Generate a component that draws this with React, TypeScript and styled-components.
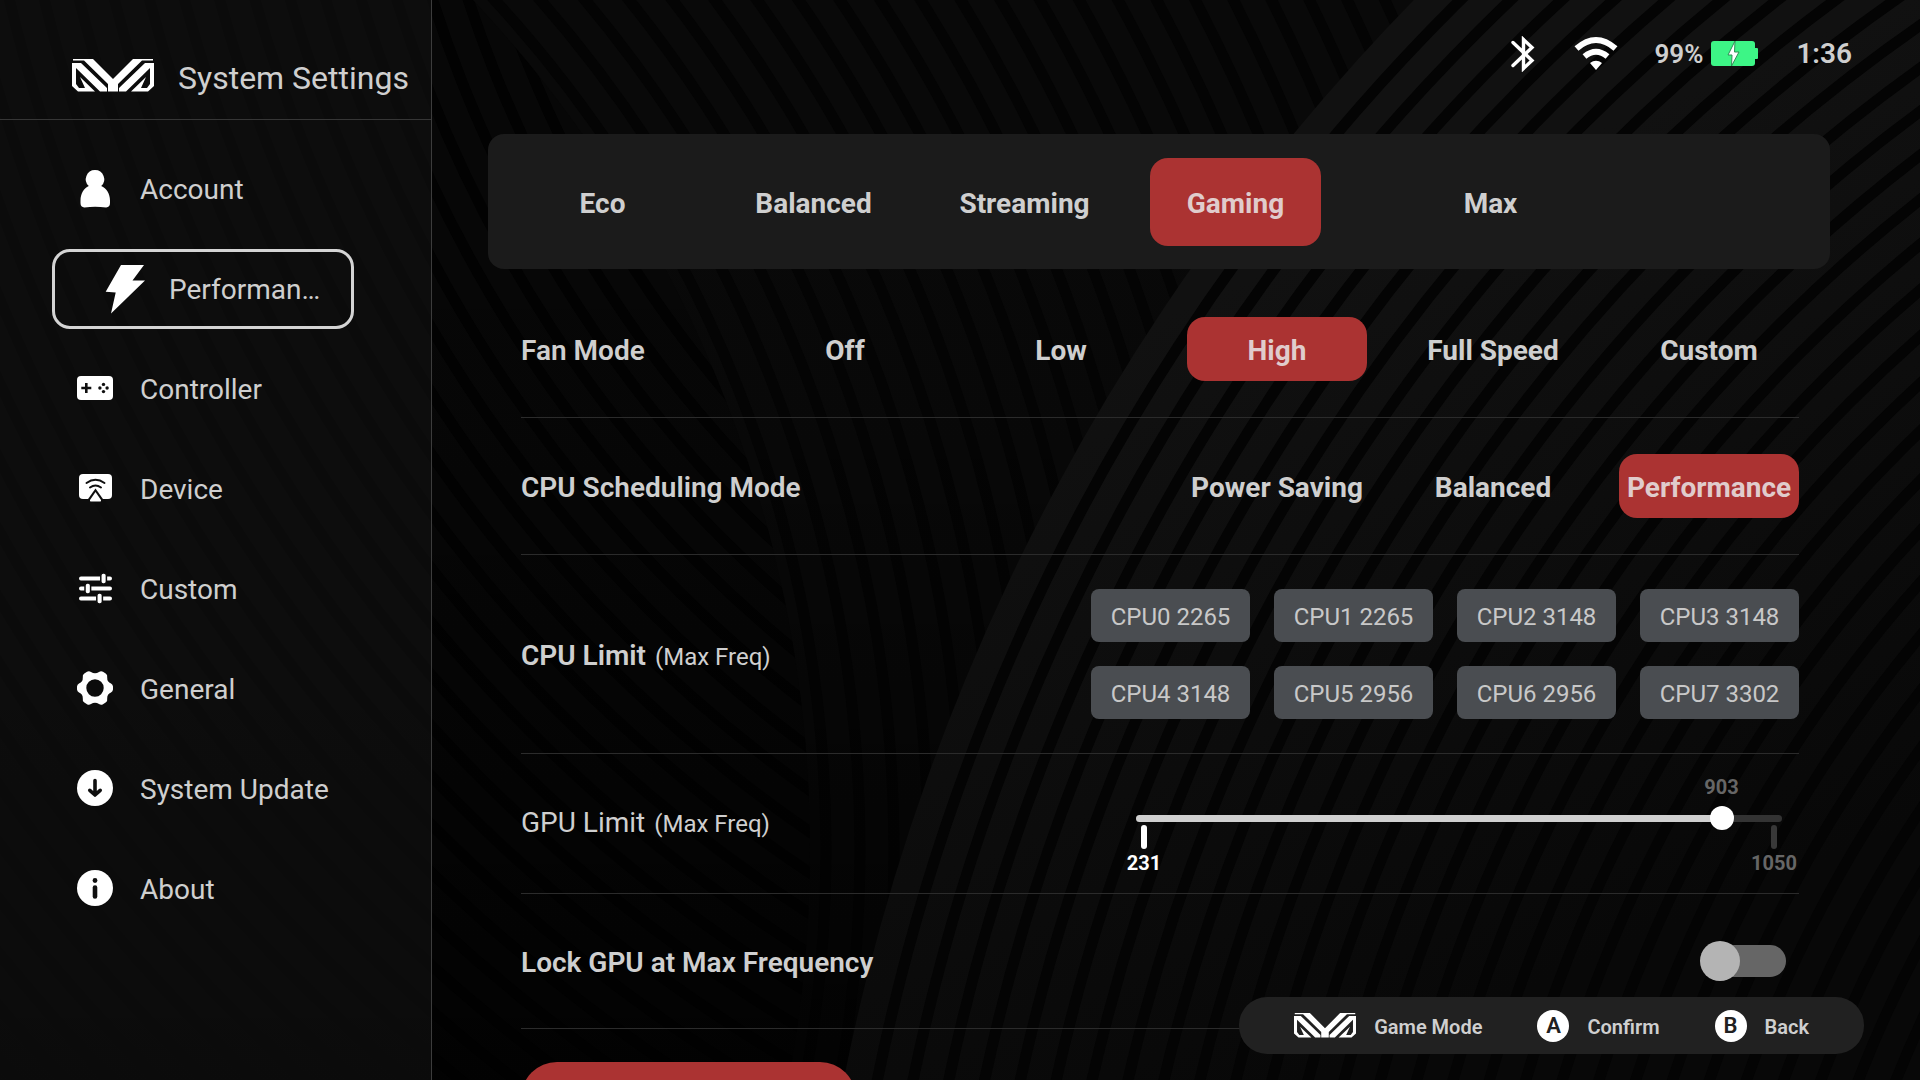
import React, { useState } from "react";
import styled, { createGlobalStyle, css } from "styled-components";

const color = {
  text: "#cfcfcf",
  accent: "#ab3332",
  panel: "#1b1b1b",
  hint: "#212121",
  chip: "#4a4d51",
  line: "#2b2b2b",
  muted: "#666666",
};

const GlobalStyle = createGlobalStyle`
  * { box-sizing: border-box; }
  body {
    margin: 0;
    background: #000;
    color: ${color.text};
    font-family: Roboto, "Noto Sans", sans-serif;
  }
  button {
    font: inherit;
    color: inherit;
    border: 0;
    padding: 0;
    background: none;
    cursor: pointer;
  }
`;

/* ---------- shell ---------- */

const Shell = styled.div`
  position: relative;
  isolation: isolate;
  display: flex;
  height: 100vh;
  overflow: hidden;
`;

const BackdropSvg = styled.svg`
  position: absolute;
  inset: 0;
  width: 100%;
  height: 100%;
  z-index: -1;
`;

const Sidebar = styled.aside`
  flex: 0 0 432px;
  border-right: 1px solid #3c3c3c;
  background: rgba(18, 18, 18, 0.6);
`;

const SidebarHeader = styled.header`
  display: flex;
  align-items: center;
  gap: 24px;
  height: 120px;
  padding: 36px 0 4px 72px;
  border-bottom: 1px solid #363636;
`;

const Title = styled.h1`
  margin: 0;
  padding-top: 4px;
  font-size: 32px;
  line-height: 40px;
  font-weight: 400;
  white-space: nowrap;
`;

const NavList = styled.ul`
  display: flex;
  flex-direction: column;
  gap: 20px;
  margin: 0;
  padding: 29px 77px 0 52px;
  list-style: none;
`;

const NavButton = styled.button<{ $active?: boolean }>`
  display: flex;
  align-items: center;
  gap: ${(p) => (p.$active ? 24 : 27)}px;
  width: 100%;
  height: 80px;
  padding-left: ${(p) => (p.$active ? 50 : 22)}px;
  border: 3px solid ${(p) => (p.$active ? "#d4d4d4" : "transparent")};
  border-radius: 18px;
  font-size: 28px;
  line-height: 36px;
  white-space: nowrap;

  svg {
    flex: none;
  }

  span {
    padding-top: 2px;
  }
`;

const Main = styled.main`
  flex: 1;
  min-width: 0;
  padding: 0 90px 0 56px;
`;

/* ---------- status bar ---------- */

const StatusBar = styled.div`
  display: flex;
  align-items: center;
  justify-content: flex-end;
  height: 134px;
  padding-bottom: 26px;
  margin-right: -22px;
`;

const Bluetooth = styled.svg`
  margin-right: 39px;
`;

const Wifi = styled.svg`
  margin-right: 36px;
`;

const BatteryText = styled.span`
  margin-right: 8px;
  font-size: 26px;
  line-height: 32px;
  font-weight: 600;
`;

const Clock = styled.time`
  margin-left: 37px;
  font-size: 28px;
  line-height: 32px;
  font-weight: 600;
`;

/* ---------- options ---------- */

const selectable = css<{ $active?: boolean }>`
  padding-top: 4px;
  border-radius: 18px;
  font-size: 28px;
  line-height: 36px;
  font-weight: 700;
  white-space: nowrap;
  background: ${(p) => (p.$active ? color.accent : "transparent")};
  color: ${(p) => (p.$active ? "#e0cccc" : color.text)};
`;

const ProfilePanel = styled.section`
  display: flex;
  gap: 40px;
  padding: 24px 29px 23px;
  border-radius: 16px;
  background: ${color.panel};
`;

const ProfileButton = styled.button<{ $active?: boolean }>`
  ${selectable}
  width: 171px;
  height: 88px;

  &:last-child {
    margin-left: 44px;
  }
`;

const Settings = styled.div`
  padding: 12px 31px 0 33px;
`;

const Row = styled.section<{ $pad: number }>`
  display: flex;
  align-items: center;
  justify-content: space-between;
  padding: ${(p) => p.$pad}px 0;
  border-bottom: 1px solid ${color.line};
`;

const RowLabel = styled.h2<{ $light?: boolean }>`
  margin: 0;
  padding-top: ${(p) => (p.$light ? 0 : 4)}px;
  font-size: 28px;
  line-height: 36px;
  font-weight: ${(p) => (p.$light ? 400 : 600)};
  white-space: nowrap;
`;

const LabelNote = styled.span`
  margin-left: 9px;
  font-size: 24px;
  font-weight: 400;
`;

const Options = styled.div`
  display: flex;
  gap: 36px;
`;

const OptionButton = styled.button<{ $active?: boolean }>`
  ${selectable}
  width: 180px;
  height: 64px;
`;

const CoreGrid = styled.div`
  display: grid;
  grid-template-columns: repeat(4, 159px);
  gap: 24px;
`;

const CoreChip = styled.button`
  height: 53px;
  padding-top: 2px;
  border-radius: 8px;
  background: ${color.chip};
  color: #c8c8c8;
  font-size: 24px;
  line-height: 32px;
`;

/* ---------- slider ---------- */

const SliderBox = styled.div`
  width: 678px;
  padding-top: 1px;
  margin-right: 1px;
`;

const ValueLane = styled.div`
  position: relative;
  height: 36px;
  margin: 0 24px;
`;

const ValueLabel = styled.output`
  position: absolute;
  transform: translateX(-50%);
  color: ${color.muted};
  font-size: 20px;
  line-height: 24px;
  font-weight: 700;
`;

const Lane = styled.div`
  display: grid;
  align-items: center;
  height: 14px;

  > * {
    grid-area: 1 / 1;
  }
`;

const Bar = styled.div`
  height: 7px;
  margin: 0 16px;
  border-radius: 4px;
  background: #333;
  overflow: hidden;
`;

const BarFill = styled.div`
  height: 100%;
  background: #d0d0d0;
`;

const Range = styled.input`
  appearance: none;
  height: 24px;
  margin: -5px 12px;
  background: transparent;

  &::-webkit-slider-runnable-track {
    height: 24px;
    background: transparent;
  }

  &::-webkit-slider-thumb {
    appearance: none;
    width: 24px;
    height: 24px;
    border-radius: 50%;
    background: #fff;
  }
`;

const Scale = styled.div`
  display: flex;
  justify-content: space-between;
`;

const ScaleEnd = styled.div<{ $dim?: boolean }>`
  display: flex;
  flex-direction: column;
  align-items: center;
  gap: 4px;
  width: 48px;
  font-size: 20px;
  line-height: 20px;
  font-weight: 700;
  color: ${(p) => (p.$dim ? color.muted : "#fff")};

  &::before {
    content: "";
    width: 6px;
    height: 24px;
    border-radius: 3px;
    background: ${(p) => (p.$dim ? "#383838" : "#fff")};
  }
`;

/* ---------- switch ---------- */

const Switch = styled.input`
  appearance: none;
  position: relative;
  display: flex;
  align-items: center;
  width: 86px;
  height: 40px;
  margin: 0 13px 0 0;
  cursor: pointer;

  &::before {
    content: "";
    flex: 1;
    height: 32px;
    margin-left: 4px;
    border-radius: 16px;
    background: #666;
  }

  &::after {
    content: "";
    position: absolute;
    left: ${(p) => (p.checked ? "46px" : "0")};
    width: 40px;
    height: 40px;
    border-radius: 50%;
    background: #b4b4b4;
  }
`;

const ActionButton = styled.button`
  display: block;
  width: 335px;
  height: 72px;
  margin-top: 33px;
  border-radius: 36px;
  background: ${color.accent};
`;

/* ---------- hint bar ---------- */

const HintBar = styled.footer`
  position: absolute;
  right: 56px;
  bottom: 26px;
  display: flex;
  align-items: center;
  gap: 55px;
  height: 57px;
  padding: 0 55px;
  border-radius: 28px;
  background: ${color.hint};
`;

const Hint = styled.button`
  display: flex;
  align-items: center;
  gap: 18px;
  font-size: 20px;
  line-height: 24px;
  font-weight: 600;
`;

const HintText = styled.span`
  padding-top: 2px;
`;

const KeyCap = styled.span`
  width: 32px;
  height: 32px;
  border-radius: 50%;
  background: #fff;
  color: ${color.hint};
  font-size: 22px;
  line-height: 32px;
  text-align: center;
`;

/* ---------- drawings ---------- */

const steps = (n: number) => Array.from({ length: n }, (_, i) => i);

function Backdrop() {
  return (
    <BackdropSvg viewBox="0 0 1920 1080" preserveAspectRatio="xMidYMid slice" aria-hidden="true">
      <defs>
        <clipPath id="inner">
          <circle cx="-430" cy="850" r="1240" />
        </clipPath>
        <linearGradient id="fade" x1="0" y1="0" x2="0" y2="1">
          <stop offset="0" stopColor="#000" stopOpacity="0" />
          <stop offset="0.4" stopColor="#000" stopOpacity="0.1" />
          <stop offset="1" stopColor="#000" stopOpacity="0.7" />
        </linearGradient>
        <linearGradient id="ring" gradientUnits="userSpaceOnUse" x1="1200" y1="300" x2="1500" y2="1000">
          <stop offset="0" stopColor="#111111" />
          <stop offset="1" stopColor="#080808" />
        </linearGradient>
      </defs>
      <rect width="1920" height="1080" fill="#090909" />
      <g fill="none" stroke="#040404" strokeWidth="11">
        {steps(34).map((i) => (
          <circle key={i} cx="-430" cy="850" r={1256 + i * 34} />
        ))}
      </g>
      <g clipPath="url(#inner)">
        <rect width="1920" height="1080" fill="#070707" />
        <g fill="none" stroke="#020202" strokeWidth="11">
          {steps(50).map((i) => (
            <circle key={i} cx="1650" cy="-389" r={700 + i * 34} />
          ))}
        </g>
      </g>
      <rect width="1920" height="1080" fill="url(#fade)" />
      <circle cx="2949" cy="1501" r="2147" fill="url(#ring)" />
      <g fill="none" stroke="#040404" strokeWidth="11">
        {steps(31).map((i) => (
          <circle key={i} cx="2949" cy="1501" r={2114 - i * 35} />
        ))}
      </g>
    </BackdropSvg>
  );
}

function Logo({ width, height }: { width: number; height: number }) {
  const half = "M0 4H9L35 29V32.5H28L4 9V25L7 29H13L8 18L23 32.5H6L0 27Z";
  return (
    <svg width={width} height={height} viewBox="0 0 82 33" fill="#fff" aria-hidden="true">
      <path d="M1 0H21L41 20L61 0H81V1.500H70L46 25V32.500H36V25L12 1.500H1Z" />
      <path d={half} />
      <path d={half} transform="translate(82 0) scale(-1 1)" />
    </svg>
  );
}

const Icon36 = ({ children }: { children: React.ReactNode }) => (
  <svg width="36" height="40" viewBox="0 0 36 40" fill="#fff" aria-hidden="true">
    {children}
  </svg>
);

const dark = "#0f0f0f";

const icons = {
  account: (
    <Icon36>
      <path d="M18 1a9.200 9.200 0 0 1 6.200 16C29.500 19.500 33 24.500 33 31.500V34c0 3-1.500 4.500-4 4.400Q18 37 7.500 38.400C5 38.500 3.500 37 3.500 34v-2.500C3.500 24.500 6.800 19.500 11.800 17A9.200 9.200 0 0 1 18 1Z" />
    </Icon36>
  ),
  performance: (
    <svg width="40" height="50" viewBox="0 0 40 50" fill="#fff" aria-hidden="true">
      <path d="M16 1H39L27.500 16.500H40L6 49.500L10.700 28.500L.7 27.700Z" />
    </svg>
  ),
  controller: (
    <Icon36>
      <rect y="7" width="36" height="24" rx="4" />
      <path d="M8 14h2.600v3.700h3.700v2.600h-3.700V24H8v-3.700H4.300v-2.600H8Z" fill={dark} />
      <g fill={dark}>
        <circle cx="26.500" cy="15.400" r="1.700" />
        <circle cx="26.500" cy="22.600" r="1.700" />
        <circle cx="22.900" cy="19" r="1.700" />
        <circle cx="30.100" cy="19" r="1.700" />
      </g>
    </Icon36>
  ),
  device: (
    <Icon36>
      <rect x="2" y="5" width="33" height="25" rx="4" />
      <path d="M18.500 19.500L27 31.500H10Z" fill={dark} />
      <path d="M18.500 23L24 31q.5 1.500-1 1.500h-9q-1.500 0-1-1.500Z" />
      <g fill="none" stroke={dark} strokeWidth="2" strokeLinecap="round">
        <path d="M9.500 14Q18.500 7.500 27.500 14" />
        <path d="M13 18.500Q18.500 14.500 24 18.500" />
      </g>
    </Icon36>
  ),
  custom: (
    <Icon36>
      <g stroke="#fff" strokeWidth="4" strokeLinecap="round">
        <path d="M4 9.500H33M4 19.500H33M4 29.500H33" />
      </g>
      <g stroke={dark} strokeWidth="1.500">
        <rect x="23.800" y="4" width="5.600" height="11" rx="2.500" />
        <rect x="8" y="14" width="5.600" height="11" rx="2.500" />
        <rect x="19.800" y="24" width="5.600" height="11" rx="2.500" />
      </g>
    </Icon36>
  ),
  general: (
    <Icon36>
      <path
        fillRule="evenodd"
        d="M10 2.800Q12 1.500 14 3Q18 5.500 22 3Q24 1.500 26 2.800L29 4.800Q30.600 6 30.200 8.500Q30 13 34 14.500Q35.800 15.500 36 17.500V20.500Q35.800 22.500 34 23.500Q30 25 30.200 29.500Q30.600 32 29 33.200L26 35.200Q24 36.500 22 35Q18 32.500 14 35Q12 36.500 10 35.200L7 33.200Q5.400 32 5.800 29.500Q6 25 2 23.500Q.2 22.500 0 20.500V17.500Q.2 15.500 2 14.500Q6 13 5.800 8.500Q5.400 6 7 4.800ZM18 10.300a8.700 8.700 0 1 0 0 17.400a8.700 8.700 0 1 0 0-17.400Z"
      />
    </Icon36>
  ),
  update: (
    <Icon36>
      <circle cx="18" cy="19" r="18" />
      <path d="M18 11.500V25.500M12.800 21.300L18 26L23.200 21.300" fill="none" stroke={dark} strokeWidth="3.600" strokeLinecap="round" strokeLinejoin="round" />
    </Icon36>
  ),
  about: (
    <Icon36>
      <circle cx="18" cy="19" r="18" />
      <circle cx="18" cy="11.500" r="2.400" fill={dark} />
      <path d="M18 18.500V27.500" stroke={dark} strokeWidth="4.600" strokeLinecap="round" />
    </Icon36>
  ),
};

/* ---------- data ---------- */

const navItems: { label: string; icon: keyof typeof icons; active?: boolean }[] = [
  { label: "Account", icon: "account" },
  { label: "Performan…", icon: "performance", active: true },
  { label: "Controller", icon: "controller" },
  { label: "Device", icon: "device" },
  { label: "Custom", icon: "custom" },
  { label: "General", icon: "general" },
  { label: "System Update", icon: "update" },
  { label: "About", icon: "about" },
];

const profiles = ["Eco", "Balanced", "Streaming", "Gaming", "Max"];
const fanModes = ["Off", "Low", "High", "Full Speed", "Custom"];
const schedulingModes = ["Power Saving", "Balanced", "Performance"];
const cores = [2265, 2265, 3148, 3148, 3148, 2956, 2956, 3302];
const gpuSteps = [231, 310, 366, 422, 500, 578, 629, 680, 720, 770, 834, 903, 1050];

export default function App() {
  const [profile, setProfile] = useState("Gaming");
  const [fan, setFan] = useState("High");
  const [scheduling, setScheduling] = useState("Performance");
  const [gpu, setGpu] = useState(11);
  const [locked, setLocked] = useState(false);
  const gpuPercent = `${(gpu / (gpuSteps.length - 1)) * 100}%`;

  return (
    <>
      <GlobalStyle />
      <Shell>
        <Backdrop />
        <Sidebar>
          <SidebarHeader>
            <Logo width={82} height={33} />
            <Title>System Settings</Title>
          </SidebarHeader>
          <nav>
            <NavList>
              {navItems.map((item) => (
                <li key={item.label}>
                  <NavButton $active={item.active} aria-current={item.active ? "page" : undefined}>
                    {icons[item.icon]}
                    <span>{item.label}</span>
                  </NavButton>
                </li>
              ))}
            </NavList>
          </nav>
        </Sidebar>

        <Main>
          <StatusBar>
            <Bluetooth width="24" height="36" viewBox="0 0 24 36" fill="none" stroke="#fff" strokeWidth="3.400" role="img" aria-label="Bluetooth">
              <path d="M2 6.500L21 24.500L12.500 32.500V3.500L21 11.500L2 29.500" strokeLinecap="round" />
            </Bluetooth>
            <Wifi width="44" height="36" viewBox="0 0 44 36" fill="none" stroke="#fff" role="img" aria-label="Wi-Fi">
              <path d="M2.500 12.500Q22 -4.500 41.500 12.500" strokeWidth="6" />
              <path d="M10.500 20.500Q22 11 33.500 20.500" strokeWidth="6" />
              <path d="M16 27Q22 22.500 28 27L22 34Z" fill="#fff" stroke="none" />
            </Wifi>
            <BatteryText>99%</BatteryText>
            <svg width="48" height="26" viewBox="0 0 48 26" role="img" aria-label="Charging">
              <rect width="44" height="25" rx="3" fill="#3df586" />
              <rect x="42" y="7" width="5" height="11" rx="1" fill="#3df586" />
              <path d="M24 0L17 14H21L20.500 25L28 11H23.500Z" fill="#fff" stroke="#2f8f55" strokeWidth="1" />
            </svg>
            <Clock>1:36</Clock>
          </StatusBar>

          <ProfilePanel aria-label="Profile">
            {profiles.map((name) => (
              <ProfileButton key={name} $active={name === profile} aria-pressed={name === profile} onClick={() => setProfile(name)}>
                {name}
              </ProfileButton>
            ))}
          </ProfilePanel>

          <Settings>
            <Row $pad={36}>
              <RowLabel>Fan Mode</RowLabel>
              <Options>
                {fanModes.map((name) => (
                  <OptionButton key={name} $active={name === fan} aria-pressed={name === fan} onClick={() => setFan(name)}>
                    {name}
                  </OptionButton>
                ))}
              </Options>
            </Row>
            <Row $pad={36}>
              <RowLabel>CPU Scheduling Mode</RowLabel>
              <Options>
                {schedulingModes.map((name) => (
                  <OptionButton key={name} $active={name === scheduling} aria-pressed={name === scheduling} onClick={() => setScheduling(name)}>
                    {name}
                  </OptionButton>
                ))}
              </Options>
            </Row>
            <Row $pad={34}>
              <RowLabel>
                CPU Limit<LabelNote>(Max Freq)</LabelNote>
              </RowLabel>
              <CoreGrid>
                {cores.map((freq, i) => (
                  <CoreChip key={i}>{`CPU${i} ${freq}`}</CoreChip>
                ))}
              </CoreGrid>
            </Row>
            <Row $pad={20}>
              <RowLabel as="label" htmlFor="gpu-limit" $light>
                GPU Limit<LabelNote>(Max Freq)</LabelNote>
              </RowLabel>
              <SliderBox>
                <ValueLane>
                  <ValueLabel htmlFor="gpu-limit" style={{ left: gpuPercent }}>
                    {gpuSteps[gpu]}
                  </ValueLabel>
                </ValueLane>
                <Lane>
                  <Bar>
                    <BarFill style={{ width: gpuPercent }} />
                  </Bar>
                  <Range
                    id="gpu-limit"
                    type="range"
                    min={0}
                    max={gpuSteps.length - 1}
                    value={gpu}
                    onChange={(e) => setGpu(Number(e.target.value))}
                  />
                </Lane>
                <Scale>
                  <ScaleEnd>231</ScaleEnd>
                  <ScaleEnd $dim>1050</ScaleEnd>
                </Scale>
              </SliderBox>
            </Row>
            <Row $pad={47}>
              <RowLabel as="label" htmlFor="gpu-lock">
                Lock GPU at Max Frequency
              </RowLabel>
              <Switch id="gpu-lock" type="checkbox" role="switch" checked={locked} onChange={(e) => setLocked(e.target.checked)} />
            </Row>
            <ActionButton aria-label="Restore defaults" />
          </Settings>
        </Main>

        <HintBar>
          <Hint>
            <Logo width={62} height={25} />
            <HintText>Game Mode</HintText>
          </Hint>
          <Hint>
            <KeyCap>A</KeyCap>
            <HintText>Confirm</HintText>
          </Hint>
          <Hint>
            <KeyCap>B</KeyCap>
            <HintText>Back</HintText>
          </Hint>
        </HintBar>
      </Shell>
    </>
  );
}
